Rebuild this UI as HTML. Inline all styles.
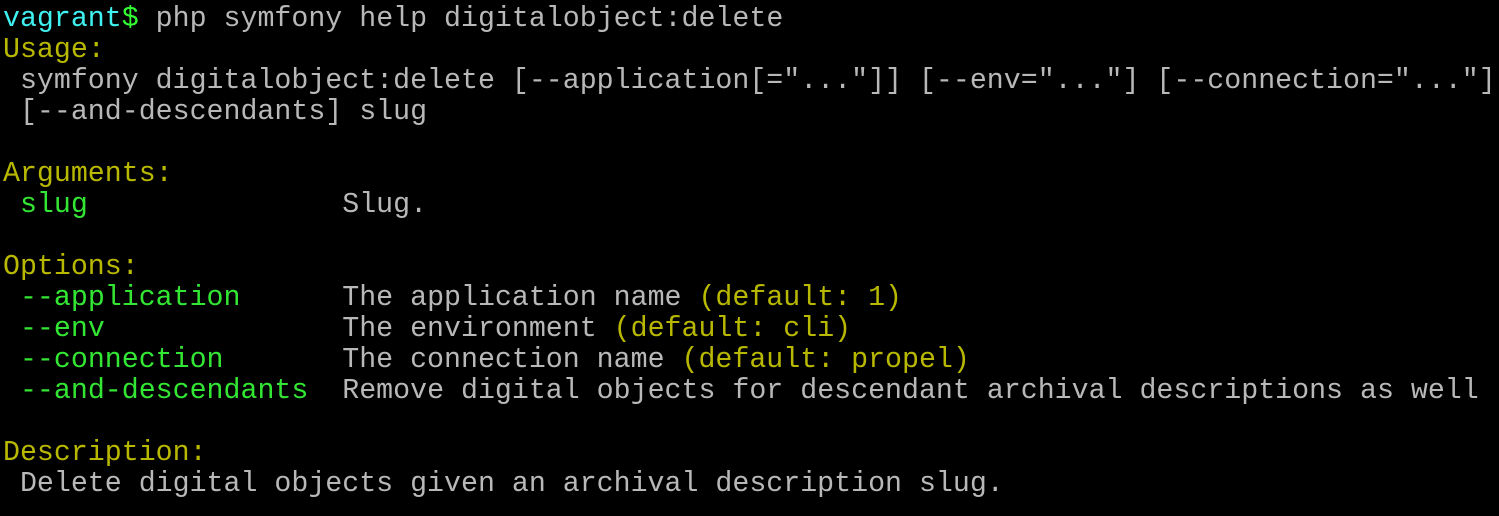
<!DOCTYPE html>
<html><head><meta charset="utf-8"><style>
html,body{margin:0;padding:0;background:#000;width:1499px;height:516px;overflow:hidden}
pre{margin:0;position:absolute;left:3px;top:4px;font-family:"Liberation Mono",monospace;font-size:28.27px;line-height:31px;color:#b8b8b8;white-space:pre}
.c{color:#3ff0f0}.g{color:#33ff33}.y{color:#b8b800}.o{color:#33e633}
</style></head><body><pre><span class="c">vagrant</span><span class="g">$</span> php symfony help digitalobject:delete
<span class="y">Usage:</span>
 symfony digitalobject:delete [--application[="..."]] [--env="..."] [--connection="..."]
 [--and-descendants] slug

<span class="y">Arguments:</span>
 <span class="o">slug</span>               Slug.

<span class="y">Options:</span>
 <span class="o">--application</span>      The application name <span class="y">(default: 1)</span>
 <span class="o">--env</span>              The environment <span class="y">(default: cli)</span>
 <span class="o">--connection</span>       The connection name <span class="y">(default: propel)</span>
 <span class="o">--and-descendants</span>  Remove digital objects for descendant archival descriptions as well

<span class="y">Description:</span>
 Delete digital objects given an archival description slug.
</pre></body></html>
